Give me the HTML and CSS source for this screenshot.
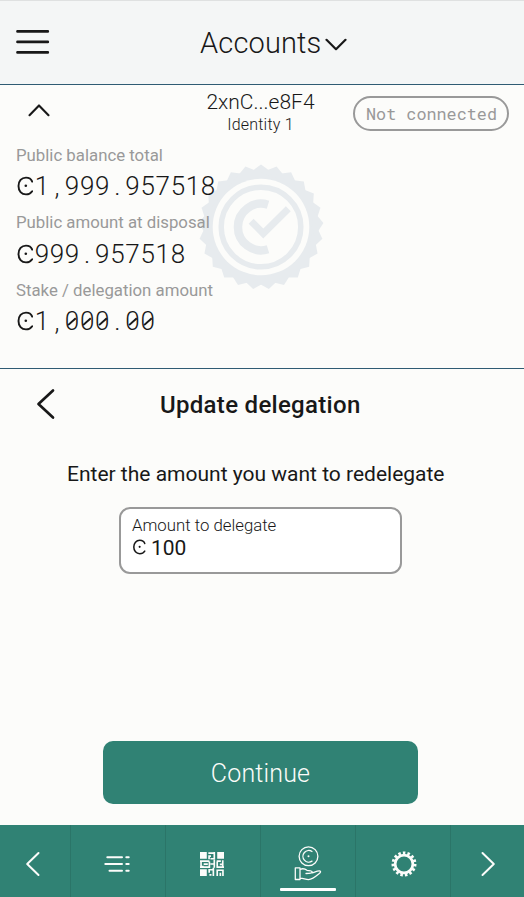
FILE: index.html
```html
<!DOCTYPE html>
<html lang="en">
<head>
<meta charset="utf-8">
<title>Accounts</title>
<link rel="stylesheet" href="styles.css">
</head>
<body>
<svg class="defs" width="0" height="0">
  <symbol id="ccd" viewBox="0 0 16 20"><path d="M15.2 15.2C13.8 17.3 11.6 18.4 9 18.4C4.5 18.4 1.5 15 1.5 10C1.5 5 4.5 1.6 9 1.6C12 1.6 14.3 3.2 15.2 5.6" fill="none" stroke="currentColor" stroke-width="1.9"/><circle cx="8.8" cy="9.8" r="1.3" fill="currentColor"/></symbol>
</svg>
<div class="app">
  <header class="top">
    <svg class="menu" width="34" height="26" viewBox="0 0 34 26"><path d="M1.5 2.4H31.8M1.5 12.9H31.8M1.5 23.4H31.8"/></svg>
    <h1>Accounts</h1>
    <svg class="chev" width="22" height="14" viewBox="0 0 22 14"><path d="M1.5 1.8L11 11.2L20.5 1.8"/></svg>
  </header>

  <section class="account">
    <div class="account-head">
      <svg class="up" width="22" height="14" viewBox="0 0 22 14"><path d="M1.5 12.2L11 2.4L20.5 12.2"/></svg>
      <div class="who"><div class="addr">2xnC...e8F4</div><div class="ident">Identity 1</div></div>
      <div class="pill">Not connected</div>
    </div>
    <svg class="seal" width="126" height="126" viewBox="-63 -63 126 126">
      <defs><path id="pent" d="M0 -62.5L59.44 -19.31L36.74 50.56L-36.74 50.56L-59.44 -19.31Z"/></defs>
      <g class="seal-fill">
        <use href="#pent"/><use href="#pent" transform="rotate(14.4)"/><use href="#pent" transform="rotate(28.8)"/><use href="#pent" transform="rotate(43.2)"/><use href="#pent" transform="rotate(57.6)"/>
      </g>
      <circle class="seal-paper" r="48.3"/>
      <circle class="seal-ring" r="39.8"/>
      <path class="seal-c" d="M7 -22.3A23.3 23.3 0 1 0 7 22.3"/>
      <path class="seal-check" d="M-7.4 -3.3L2.3 6.5L24.8 -15.7"/>
    </svg>
    <dl class="balances">
      <dt>Public balance total</dt>
      <dd><svg class="sym"><use href="#ccd"/></svg><span>1</span><span>,</span><span>9</span><span>9</span><span>9</span><span>.</span><span>9</span><span>5</span><span>7</span><span>5</span><span>1</span><span>8</span></dd>
      <dt>Public amount at disposal</dt>
      <dd class="tall"><svg class="sym"><use href="#ccd"/></svg><span>9</span><span>9</span><span>9</span><span>.</span><span>9</span><span>5</span><span>7</span><span>5</span><span>1</span><span>8</span></dd>
      <dt>Stake / delegation amount</dt>
      <dd><svg class="sym"><use href="#ccd"/></svg><span>1</span><span>,</span><span class="z">0</span><span class="z">0</span><span class="z">0</span><span>.</span><span class="z">0</span><span class="z">0</span></dd>
    </dl>
  </section>

  <main>
    <div class="title-row">
      <svg class="back" width="20" height="32" viewBox="0 0 20 32"><path d="M17 2.5L2.5 16L17 29.5"/></svg>
      <h2>Update delegation</h2>
    </div>
    <p class="lead">Enter the amount you want to redelegate</p>
    <div class="field">
      <div class="label">Amount to delegate</div>
      <div class="value"><svg class="sym-s"><use href="#ccd"/></svg>100</div>
    </div>
    <button class="go">Continue</button>
  </main>

  <nav>
    <a><svg width="16" height="26" viewBox="0 0 16 26"><path class="ln" d="M13.5 2L2.2 13L13.5 24"/></svg></a>
    <a class="nudge"><svg width="26" height="18" viewBox="0 0 26 18"><path class="ln" d="M3.3 2.3H18M1.3 9H18M5.5 15.7H18M22.3 2.3H24.7M22.3 9H24.7M22.3 15.7H24.7"/></svg></a>
    <a class="nudge"><svg class="qr" width="24" height="24" viewBox="0 0 23 23"><path class="fl" d="M0 0H6.5V6.5H0ZM16.5 0H23V6.5H16.5ZM0 16.5H6.5V23H0Z"/><path class="qp" d="M8 1H13M10.5 4H8.7V7M13.7 0V6.5H10M0 8.8H9M1 8V14H3.5M3.5 11.6H7.5M9 9V14.5H0M10 11.5H14M13.7 7.5V15M16 8.8H20M16.5 9V14.5H23M21.8 8V14.5M19 11.8H22M8 17H13M8.8 17V20M9 22H11M12.8 15V23M16.5 23V17.5H22V23M19.5 20V23"/></svg></a>
    <a class="on"><svg width="28" height="36" viewBox="0 0 28 36"><circle cx="14.5" cy="10.3" r="9.4"/><path d="M18 5.5A5.8 5.8 0 1 0 18 15.1"/><circle class="fl dot" cx="14.5" cy="10.3" r="1"/><path d="M1.3 21.9H6V33.5H1.3ZM6 23.3C9 22.2 11 22.7 13 24.3C15 24.7 18 24.5 18.2 25.9C18.3 27.3 16 27.5 12 27.5M18 26.9C21 26 23 24.8 25.5 24.9C27.3 25.2 26.5 26.7 25 27.7C21 31 18 33.3 14.5 33.7C11.5 33.7 9 32 6 32.2"/></svg></a>
    <a class="gear"><svg width="26" height="26" viewBox="-13 -13 26 26"><circle class="ring" r="8.9"/><circle class="teeth" r="11" pathLength="30"/></svg></a>
    <a><svg width="16" height="26" viewBox="0 0 16 26"><path class="ln" d="M2.5 2L13.8 13L2.5 24"/></svg></a>
  </nav>
</div>
</body>
</html>
```
FILE: styles.css
```css
* { box-sizing: border-box; margin: 0; padding: 0; }
body { background: #fcfcfa; color: #181818; font-family: Roboto, "Liberation Sans", sans-serif; }
.defs { display: block; }
.app { width: 524px; height: 897px; display: flex; flex-direction: column; overflow: hidden; }
svg { display: block; fill: none; stroke-linecap: round; stroke-linejoin: round; }

.top { height: 85px; flex: none; display: flex; align-items: center; background: #f4f6f6; border-top: 1px solid #dfe1e1; border-bottom: 1px solid #2f5b73; padding-left: 16px; }
.menu { stroke: #181818; stroke-width: 2.7; margin-bottom: 2px; }
.top h1 { margin-left: 150px; width: 122px; font-size: 29px; font-weight: 300; letter-spacing: .15px; white-space: nowrap; }
.chev { margin: 4px 0 0 3px; stroke: #181818; stroke-width: 2.2; }

.account { position: relative; height: 284px; flex: none; border-bottom: 1px solid #2f5b73; }
.account-head { display: grid; grid-template-columns: 200px 121px 1fr; height: 60px; }
.up { margin: 18px 0 0 28px; stroke: #181818; stroke-width: 2.1; }
.who { text-align: center; font-weight: 300; padding-top: 4px; }
.addr { font-size: 21px; line-height: 26px; }
.ident { font-size: 16px; line-height: 19px; letter-spacing: .2px; }
.pill { margin: 11px 0 0 32px; width: 156px; height: 35px; padding-left: 1px; border: 2px solid #999; border-radius: 18px; color: #999; font: 16.8px/31px "Roboto Mono", "Liberation Mono", monospace; text-align: center; white-space: nowrap; }
.seal { position: absolute; left: 198px; top: 79px; }
.seal-fill { fill: #e7ebee; }
.seal-paper { fill: #fcfcfa; }
.seal-ring { stroke: #e7ebee; stroke-width: 5.5; }
.seal-c, .seal-check { stroke: #e7ebee; stroke-width: 8.5; stroke-linecap: butt; stroke-linejoin: miter; }
.seal-check { stroke-width: 7; stroke-linecap: square; }
.balances { position: relative; padding-left: 16px; }
.balances dt { font-size: 16.8px; line-height: 20px; height: 20px; color: #999; }
.balances dd { display: flex; align-items: center; height: 47px; padding-bottom: 6px; font-size: 26px; font-weight: 350; }
.balances dd.tall { height: 48px; padding-bottom: 5px; }
.balances dd span { position: relative; width: 15.12px; text-align: center; }
.sym { width: 16px; height: 20px; margin: 0 1.8px 0 .5px; }
.z::after { content: ""; position: absolute; left: 6.8px; top: 9px; width: 1.6px; height: 13px; background: #181818; transform: rotate(48deg) scaleY(.8); }

main { flex: 1; display: flex; flex-direction: column; align-items: center; }
.title-row { display: grid; grid-template-columns: 160px 1fr; width: 100%; height: 70px; align-items: center; }
.back { margin-left: 36px; stroke: #181818; stroke-width: 2.7; }
.title-row h2 { padding: 2px 0 0 0; font-size: 24px; font-weight: 500; letter-spacing: .3px; }
.lead { width: 390px; margin: 22px 0 0; font-size: 21px; line-height: 26px; letter-spacing: 0; white-space: nowrap; }
.field { width: 283px; height: 67px; margin: 20px 3px 0 0; padding: 7px 11px; background: #fff; border: 2px solid #999; border-radius: 11px; }
.label { font-size: 16.8px; line-height: 18px; font-weight: 300; }
.value { display: flex; align-items: center; gap: 5px; margin-top: 1px; font-size: 21px; line-height: 26px; }
.sym-s { width: 14px; height: 16px; margin-bottom: 3px; }
.go { width: 315px; height: 63px; margin: 167px 3px 0 0; border: 0; border-radius: 10px; background: #308274; color: #fcfcfa; font: 300 25px Roboto, sans-serif; letter-spacing: .15px; padding-top: 2px; }

nav { height: 72px; flex: none; display: grid; grid-template-columns: 71px repeat(4, 95px) 73px; background: #308274; }
nav a { position: relative; display: flex; align-items: center; justify-content: center; border-right: 1px solid #2b7568; padding-top: 5px; }
nav a:first-child { padding-right: 5px; }
nav a:last-child { border: 0; }
nav .nudge { padding-right: 2px; }
nav .gear { padding-left: 1px; }
nav svg { stroke: #fcfcfa; stroke-width: 1.3; }
nav .ln { stroke-width: 2; }
nav .fl { fill: #fcfcfa; stroke: none; }
.qp { stroke-width: 1.6; stroke-linecap: butt; stroke-linejoin: miter; }
.ring { stroke-width: 2.8; }
.teeth { stroke-width: 3; stroke-dasharray: 1.1 .9; stroke-linecap: butt; }
.on::after { content: ""; position: absolute; left: 19px; bottom: 6px; width: 56px; height: 3px; border-radius: 1px; background: #fff; }
```
